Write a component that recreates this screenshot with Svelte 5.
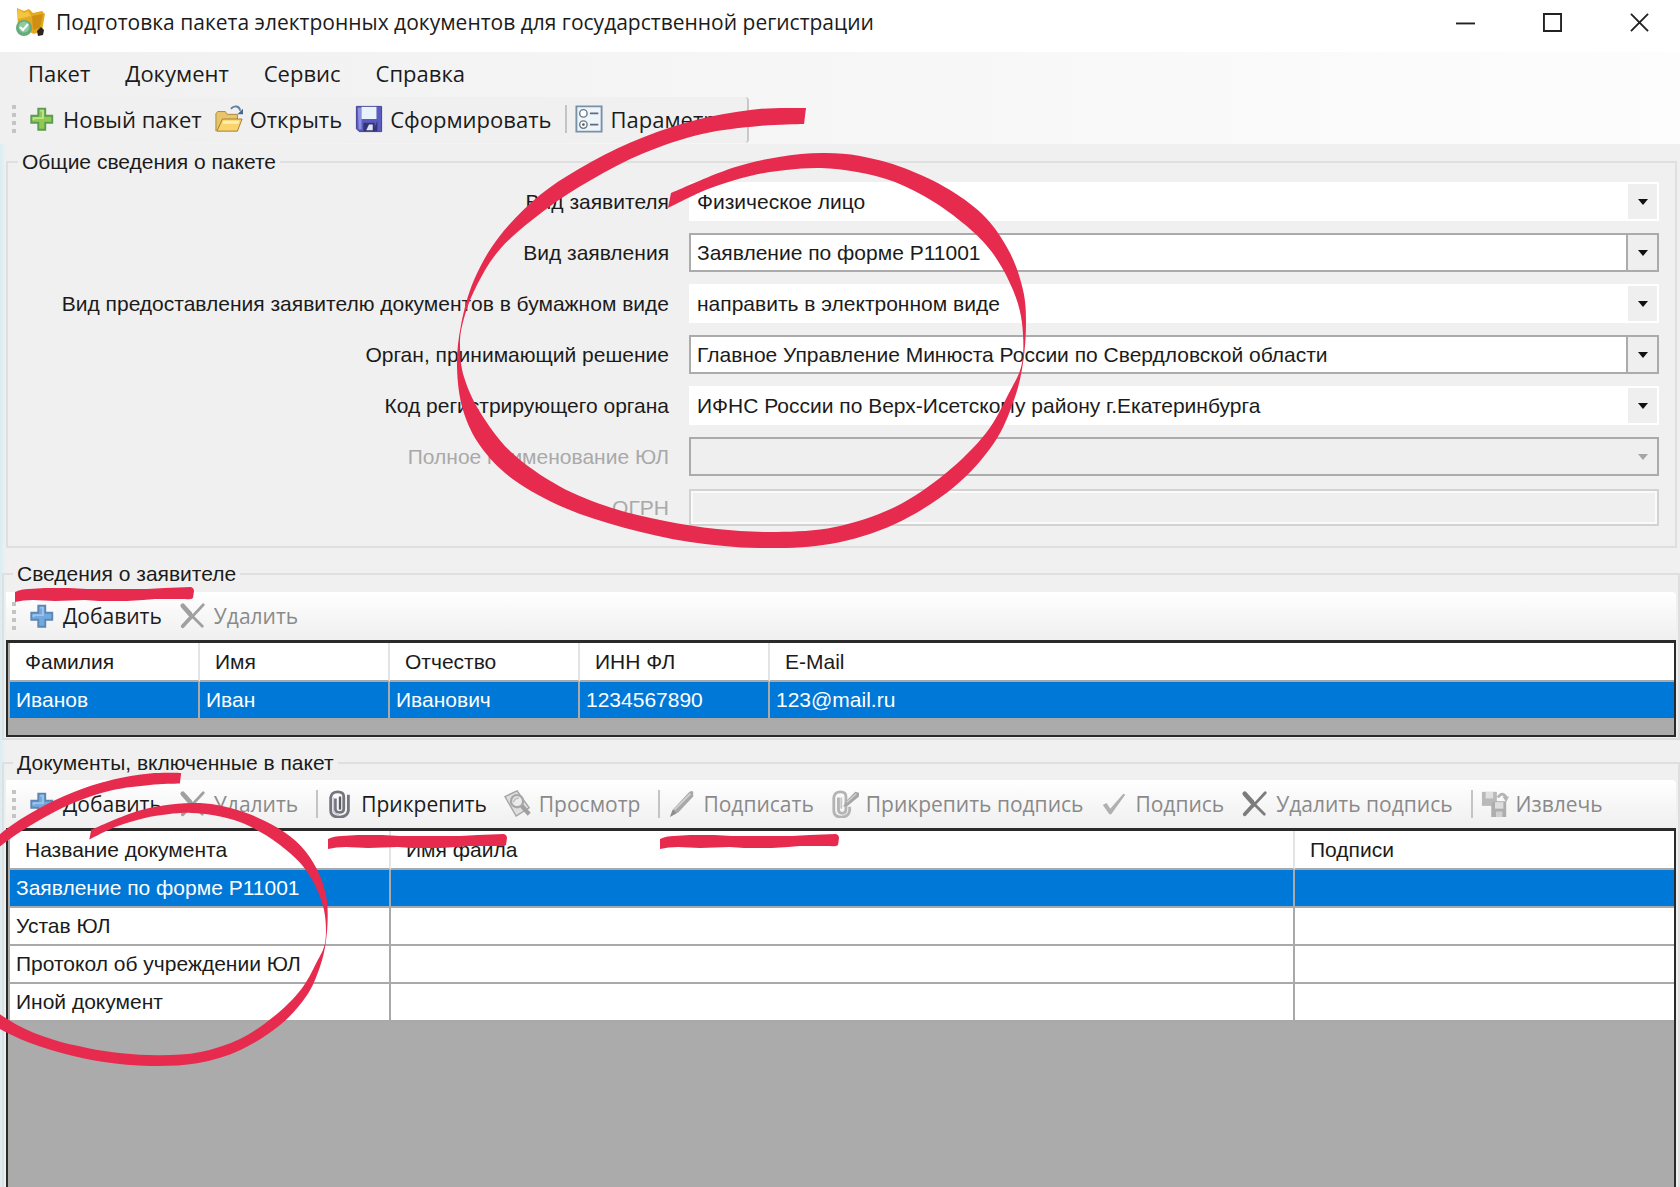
<script lang="ts">
	type Tool = { icon: string; label: string; disabled?: boolean; sep?: boolean };

	const menu = ['Пакет', 'Документ', 'Сервис', 'Справка'];

	const mainTools: Tool[] = [
		{ icon: 'plus-green', label: 'Новый пакет' },
		{ icon: 'folder', label: 'Открыть' },
		{ icon: 'save', label: 'Сформировать' },
		{ icon: 'params', label: 'Параметры', sep: true }
	];

	const personTools: Tool[] = [
		{ icon: 'plus-blue', label: 'Добавить' },
		{ icon: 'cross', label: 'Удалить', disabled: true }
	];

	const docTools: Tool[] = [
		{ icon: 'plus-blue', label: 'Добавить' },
		{ icon: 'cross', label: 'Удалить', disabled: true },
		{ icon: 'clip', label: 'Прикрепить', sep: true },
		{ icon: 'preview', label: 'Просмотр', disabled: true },
		{ icon: 'pen', label: 'Подписать', disabled: true, sep: true },
		{ icon: 'clip-pen', label: 'Прикрепить подпись', disabled: true },
		{ icon: 'check', label: 'Подпись', disabled: true },
		{ icon: 'cross-dark', label: 'Удалить подпись', disabled: true },
		{ icon: 'extract', label: 'Извлечь', disabled: true, sep: true }
	];

	const fields = [
		{ id: 'applicant', label: 'Вид заявителя', value: 'Физическое лицо', flat: true },
		{ id: 'statement', label: 'Вид заявления', value: 'Заявление по форме Р11001' },
		{
			id: 'delivery',
			label: 'Вид предоставления заявителю документов в бумажном виде',
			value: 'направить в электронном виде',
			flat: true
		},
		{
			id: 'authority',
			label: 'Орган, принимающий решение',
			value: 'Главное Управление Минюста России по Свердловской области'
		},
		{
			id: 'code',
			label: 'Код регистрирующего органа',
			value: 'ИФНС России по Верх-Исетскому району г.Екатеринбурга',
			flat: true
		},
		{ id: 'fullname', label: 'Полное наименование ЮЛ', value: '', disabled: true }
	];

	const personCols = ['Фамилия', 'Имя', 'Отчество', 'ИНН ФЛ', 'E-Mail'];
	const persons = [['Иванов', 'Иван', 'Иванович', '1234567890', '123@mail.ru']];

	const docCols = ['Название документа', 'Имя файла', 'Подписи'];
	const docs = [
		'Заявление по форме Р11001',
		'Устав ЮЛ',
		'Протокол об учреждении ЮЛ',
		'Иной документ'
	];

	let selectedPerson = $state(0);
	let selectedDoc = $state(0);

	// marker strokes: outer and inner edge of one hand-drawn loop
	type Point = [number, number];

	const outer: Point[] = [
		[806, 108], [759, 109], [700, 119], [644, 137], [591, 162], [540, 195], [499, 237], [474, 280],
		[461, 325], [457, 367], [463, 410], [481, 447], [514, 480], [565, 508], [625, 528], [690, 542],
		[759, 548], [830, 544], [895, 524], [954, 487], [994, 443], [1014, 400], [1023, 363],
		[1026, 323], [1023, 290], [1010, 253], [986, 218], [950, 190], [904, 168], [860, 156],
		[822, 153], [779, 157], [732, 168], [671, 193]
	];
	const inner: Point[] = [
		[668, 208], [708, 189], [750, 176], [786, 170], [821, 168], [857, 172], [895, 182], [934, 202],
		[970, 229], [994, 255], [1013, 290], [1022, 323], [1022, 363], [1009, 393], [986, 433],
		[946, 473], [895, 507], [835, 527], [776, 532], [717, 529], [665, 521], [612, 508], [559, 486],
		[511, 452], [480, 412], [464, 377], [460, 347], [463, 322], [476, 287], [501, 248], [545, 210],
		[591, 180], [644, 153], [702, 134], [759, 126], [804, 124]
	];

	function curve(pts: Point[]) {
		let d = '';
		for (let i = 0; i < pts.length - 1; i++) {
			const a = pts[Math.max(i - 1, 0)];
			const b = pts[i];
			const c = pts[i + 1];
			const e = pts[Math.min(i + 2, pts.length - 1)];
			d += `C${b[0] + (c[0] - a[0]) / 6} ${b[1] + (c[1] - a[1]) / 6} `;
			d += `${c[0] - (e[0] - b[0]) / 6} ${c[1] - (e[1] - b[1]) / 6} ${c[0]} ${c[1]}`;
		}
		return d;
	}

	const loop = `M${outer[0]}${curve(outer)}L${inner[0]}${curve(inner)}Z`;
	const dash =
		'M0 4Q6 1 14 1L30 0 54 0 72 1 98 1 132 1 150 0 176 -1Q179 0 179 3L178 10Q176 12 170 11L140 11 128 12 112 13 84 13 70 12 40 13 18 12Q8 12 0 14Z';
</script>

{#snippet icon(name: string)}
	<svg class="icon" viewBox="0 0 30 30" aria-hidden="true">
		{#if name === 'plus-green'}
			<path d="M11 4h7.500v7.500H26V19h-7.500v7.500H11V19H3.500v-7.500H11z" fill="#93c950" stroke="#5a9c52" stroke-width="2" />
			<path d="M13 6h3v8H6v2" fill="none" stroke="#bfe38c" stroke-width="2" />
		{:else if name === 'plus-blue'}
			<path d="M11 4h7.500v7.500H26V19h-7.500v7.500H11V19H3.500v-7.500H11z" fill="#74a9df" stroke="#5d87b3" stroke-width="2" />
			<path d="M13 6h3v8H6v2" fill="none" stroke="#9cc4ee" stroke-width="2" />
		{:else if name === 'folder'}
			<path d="M1 28V9l2-2h8l2 3h11v5" fill="#e8c46a" stroke="#a88639" />
			<path d="M2 28 8 15h21l-5 13z" fill="#fbd36b" stroke="#9d7a30" />
			<path d="M9 17h17l-1 3H8z" fill="#fff0b0" />
			<path d="M17 4c4-4 9-3 10 2" fill="none" stroke="#5f7f9f" stroke-width="2" />
			<path d="M30 4v6h-6z" fill="#47698d" />
		{:else if name === 'save'}
			<path d="M1.500 1.500h27v27h-24l-3-3z" fill="#5a5bc0" stroke="#3b3c8f" />
			<path d="M3 3h4v23H4z" fill="#8e90e2" />
			<path d="M7 2h16v13H7z" fill="#e9f2fb" />
			<path d="M24 17v11h-5z" fill="#34357f" />
			<path d="M9 19h12v9H9z" fill="#33356f" />
			<path d="M15 21h4v6h-7z" fill="#dfe3f3" />
		{:else if name === 'params'}
			<path d="M1.500 1.500h27v27h-27z" fill="#eef5fa" stroke="#7990a5" stroke-width="2" />
			<circle cx="9" cy="9" r="4" fill="#fff" stroke="#6a7885" stroke-width="1.500" />
			<circle cx="9" cy="21" r="4" fill="#fff" stroke="#6a7885" stroke-width="1.500" />
			<circle cx="9" cy="21" r="1.500" fill="#56636f" />
			<path d="M16 9h9M16 21h9" stroke="#5b6e80" stroke-width="2" />
		{:else if name === 'cross' || name === 'cross-dark'}
			<g stroke={name === 'cross' ? '#a0a0a0' : '#7c7c7c'} fill="none" stroke-linecap="round">
				<path d="M4 4 12 13" stroke-width="5" />
				<path d="M11 12 25 26" stroke-width="3" />
				<path d="M26 3 13 17" stroke-width="3" />
				<path d="M14 15 4 26" stroke-width="4" />
			</g>
		{:else if name === 'clip'}
			<path
				d="M10 9v11q0 4 4.500 4t4.500-4V7q0-5-6.500-5T5 8v14q0 7 9 7t10-7V5"
				fill="none"
				stroke="#75757f"
				stroke-width="3"
			/>
			<path d="M15 7v14" stroke="#5d5d68" stroke-width="2.500" />
			<path d="M8 8v14q1 4 6 4" fill="none" stroke="#c8c8d0" stroke-width="1.500" />
		{:else if name === 'preview'}
			<path d="M1 7 14 1l13 18-14 9z" fill="#dedede" stroke="#a4a4a4" stroke-width="1.500" />
			<circle cx="14" cy="12" r="6.500" fill="#ececec" stroke="#a8a8a8" stroke-width="2.500" />
			<path d="M19 17 27 26" stroke="#a0a0a0" stroke-width="4.500" />
			<path d="M10 13q2-5 6-4" fill="none" stroke="#bbb" stroke-width="1.500" />
		{:else if name === 'pen'}
			<path d="M3 28 6 20 22 3q3-3 5-1v5L11 24z" fill="#a8a8a8" />
			<path d="M7 21 24 4" stroke="#cfcfcf" stroke-width="2" />
			<path d="M2 29 5 21 9 25z" fill="#8d8d8d" />
		{:else if name === 'clip-pen'}
			<path
				d="M8 8v13q0 4 4 4t4-4V7q0-5-6-5T3 8v14q0 7 8 7t9-7v-4"
				fill="none"
				stroke="#b4b4b4"
				stroke-width="3"
			/>
			<path d="M11 8v12" stroke="#c6c6c6" stroke-width="2" />
			<path d="M13 18 16 12 26 2l4 1v4L18 17z" fill="#a6a6a6" />
			<path d="M17 13 27 4" stroke="#d0d0d0" stroke-width="1.500" />
		{:else if name === 'check'}
			<path d="M3 16 7 14l4 6L25 4l2 1L12 26h-2z" fill="#b0b0b0" />
		{:else if name === 'extract'}
			<path d="M1 2h16v15H1z" fill="#b9b9b9" />
			<path d="M5 2h8v7H5z" fill="#e0e0e0" />
			<path d="M14 12h13v17H11V15z" fill="#adadad" />
			<path d="M15 13h9v7h-9z" fill="#dedede" />
			<path d="M16 23h7v6h-7z" fill="#d0d0d0" />
			<path d="M18 8q5-7 9 0" fill="none" stroke="#b5b5b5" stroke-width="3" />
			<path d="M23 7h7l-3 6z" fill="#b5b5b5" />
		{/if}
	</svg>
{/snippet}

{#snippet toolbar(tools: Tool[])}
	<span class="grip" aria-hidden="true"><i></i><i></i><i></i><i></i></span>
	{#each tools as tool}
		{#if tool.sep}<span class="sep"></span>{/if}
		<button class="tool" disabled={tool.disabled}>
			{@render icon(tool.icon)}{tool.label}
		</button>
	{/each}
{/snippet}

<main>
	<header class="titlebar">
		<svg class="logo" viewBox="0 0 30 30" aria-hidden="true">
			<path d="M2 1 9 4 14 2l4 4 9-2 3 3-3 17-8 3L3 20z" fill="#e5a91f" />
			<path d="M3 2 9 6l4-2 3 5-13 3z" fill="#f3c63e" />
			<path d="M17 9 28 7l-3 14-7 2z" fill="#cf8f14" />
			<path d="M22 24l4-4 3 3-1 5-5 1z" fill="#2b2622" />
			<circle cx="9" cy="21" r="8" fill="#62ad7b" />
			<circle cx="9" cy="20" r="5.500" fill="#8fcaa0" />
			<path d="M5 20l3 3 5-6" fill="none" stroke="#fff" stroke-width="2" />
		</svg>
		<h1>Подготовка пакета электронных документов для государственной регистрации</h1>
		<div class="window-buttons">
			<button aria-label="Свернуть">
				<svg viewBox="0 0 20 20"><path d="M0 11h20" /></svg>
			</button>
			<button aria-label="Развернуть">
				<svg viewBox="0 0 20 20"><path d="M1 1h18v18H1z" /></svg>
			</button>
			<button aria-label="Закрыть">
				<svg viewBox="0 0 20 20"><path d="M1 1l18 18M19 1 1 19" /></svg>
			</button>
		</div>
	</header>

	<nav>
		{#each menu as item}
			<button>{item}</button>
		{/each}
	</nav>

	<div class="strip">
		<div class="bar main-bar">{@render toolbar(mainTools)}</div>
	</div>

	<fieldset class="general">
		<legend>Общие сведения о пакете</legend>
		<div class="form">
			{#each fields as field}
				<label for={field.id} class:off={field.disabled}>{field.label}</label>
				<div class="combo" class:flat={field.flat} class:off={field.disabled}>
					<select id={field.id} disabled={field.disabled}>
						<option>{field.value}</option>
					</select>
					<span class="arrow"></span>
				</div>
			{/each}
			<label for="ogrn" class="off">ОГРН</label>
			<input id="ogrn" type="text" disabled />
		</div>
	</fieldset>

	<fieldset class="person">
		<legend>Сведения о заявителе</legend>
		<div class="bar">{@render toolbar(personTools)}</div>
		<div class="grid">
			<table>
				<colgroup>
					<col class="c-name" /><col class="c-name" /><col class="c-name" /><col class="c-name" /><col />
				</colgroup>
				<thead>
					<tr>
						{#each personCols as col}<th>{col}</th>{/each}
					</tr>
				</thead>
				<tbody>
					{#each persons as row, i}
						<tr class:selected={i === selectedPerson} onclick={() => (selectedPerson = i)}>
							{#each row as cell}<td>{cell}</td>{/each}
						</tr>
					{/each}
				</tbody>
			</table>
		</div>
	</fieldset>

	<fieldset class="docs">
		<legend>Документы, включенные в пакет</legend>
		<div class="bar">{@render toolbar(docTools)}</div>
		<div class="grid">
			<table>
				<colgroup><col class="c-title" /><col class="c-file" /><col /></colgroup>
				<thead>
					<tr>
						{#each docCols as col}<th>{col}</th>{/each}
					</tr>
				</thead>
				<tbody>
					{#each docs as doc, i}
						<tr class:selected={i === selectedDoc} onclick={() => (selectedDoc = i)}>
							<td>{doc}</td>
							<td></td>
							<td></td>
						</tr>
					{/each}
				</tbody>
			</table>
		</div>
	</fieldset>

	<svg class="marker" viewBox="0 0 1680 1187" aria-hidden="true">
		<path d={loop} />
		<path d={loop} transform="translate(-355.600 701) scale(0.666)" />
		<path d={dash} transform="translate(15 588)" />
		<path d={dash} transform="translate(328 835)" />
		<path d={dash} transform="translate(660 835)" />
	</svg>
</main>

<style>
	:global(body) {
		margin: 0;
	}

	main {
		position: relative;
		box-sizing: border-box;
		display: flex;
		flex-direction: column;
		min-height: 100vh;
		overflow: hidden;
		background: linear-gradient(90deg, #d9edf3, #f0f0f0 6px);
		color: #1b1b1b;
		font: 21px/24px 'Liberation Sans', Arial, sans-serif;
	}

	button,
	select,
	input {
		margin: 0;
		padding: 0;
		border: 0;
		background: none;
		color: inherit;
		font: inherit;
	}

	.titlebar,
	nav,
	.bar {
		font-family: 'Open Sans', 'Noto Sans', sans-serif;
	}

	.titlebar {
		display: flex;
		align-items: center;
		height: 52px;
		padding: 0 31px 8px 14px;
		box-sizing: border-box;
		background: #fff;
	}

	.logo {
		width: 32px;
		height: 30px;
	}

	h1 {
		flex: 1;
		margin: 0 0 0 10px;
		font-size: 21px;
		font-weight: 400;
	}

	.window-buttons {
		display: flex;
		gap: 68px;
	}

	.window-buttons button {
		display: flex;
	}

	.window-buttons svg {
		width: 19px;
		height: 19px;
		fill: none;
		stroke: #222;
		stroke-width: 2;
	}

	nav,
	.main-bar {
		font-size: 22px;
	}

	nav {
		display: flex;
		align-items: center;
		gap: 35px;
		height: 45px;
		padding: 0 28px 4px;
		box-sizing: border-box;
		background: linear-gradient(90deg, #f0f0f0, #fdfdfd);
	}

	.strip {
		display: flex;
		height: 47px;
		background: linear-gradient(90deg, #f0f0f0, #fdfdfd);
	}

	.bar {
		display: flex;
		align-items: center;
		height: 48px;
		padding-left: 6px;
		box-sizing: border-box;
		background: linear-gradient(#fff, #efefef);
		border-radius: 0 4px 4px 0;
	}

	.main-bar {
		height: 46px;
		padding: 0 4px 2px 12px;
		background: #f0f0f0;
		border-right: 2px solid #c8c8c8;
	}

	.grip {
		display: grid;
		gap: 4px;
		width: 4px;
		margin-right: 8px;
	}

	.grip i {
		width: 4px;
		height: 4px;
		background: #c4c4c4;
	}

	.sep {
		width: 2px;
		height: 28px;
		margin: 0 4px 0 5px;
		background: #c4c4c4;
	}

	.tool {
		display: flex;
		align-items: center;
		gap: 7px;
		padding: 0 13px 0 4px;
		white-space: nowrap;
	}

	.main-bar .tool {
		padding-right: 9px;
	}

	.tool:disabled {
		color: #8a8a8a;
	}

	.icon {
		width: 28px;
		height: 28px;
	}

	fieldset {
		min-width: 0;
		margin: 0;
		padding: 0;
		border: 2px solid #dfdfdf;
	}

	legend {
		padding: 0 4px;
		margin-left: 7px;
	}

	.general {
		margin: 6px 3px 0 6px;
		padding: 8px 16px 19px 12px;
	}

	.general legend {
		margin-left: -2px;
	}

	.form {
		display: grid;
		grid-template-columns: 649px 1fr;
		grid-auto-rows: 39px;
		gap: 12px 20px;
		align-items: center;
	}

	label {
		text-align: right;
	}

	label.off {
		color: #a9a9a9;
	}

	.combo {
		display: grid;
		grid-template-columns: 1fr 31px;
		height: 39px;
		box-sizing: border-box;
		border: 2px solid #ababab;
		background: #fff;
	}

	.combo select {
		grid-area: 1 / 1 / 2 / 3;
		appearance: none;
		padding: 0 40px 0 6px;
		outline: none;
		opacity: 1;
	}

	.arrow {
		grid-area: 1 / 2 / 2 / 3;
		display: grid;
		place-items: center;
		border-left: 2px solid #ababab;
		background: #efefef;
		pointer-events: none;
	}

	.arrow::before {
		content: '';
		border: 5px solid transparent;
		border-top: 6px solid #111;
		border-bottom: 0;
	}

	.combo.flat,
	.combo.flat .arrow {
		border-color: #fff;
	}

	.combo.off {
		background: #efefef;
	}

	.combo.off .arrow {
		border-color: transparent;
	}

	.combo.off .arrow::before {
		border-top-color: #a5a5a5;
	}

	input {
		height: 37px;
		box-sizing: border-box;
		border: 2px solid #d2d2d2;
		background: #efefef;
		box-shadow: inset 0 0 0 2px #fafafa;
	}

	.person,
	.docs {
		margin: 14px 0 0 2px;
		padding: 6px 2px 1px;
	}

	.docs {
		flex: 1;
		margin-top: 11px;
		padding: 5px 2px 0;
		border-bottom: 0;
	}

	.grid {
		min-height: 92px;
		padding-left: 2px;
		border: 2px solid #2a2a2a;
		border-top-width: 3px;
		background: #ababab;
	}

	.docs .grid {
		min-height: calc(100vh - 831px);
		border-bottom: 0;
	}

	table {
		width: 100%;
		border-collapse: separate;
		border-spacing: 0;
		table-layout: fixed;
	}

	.c-name {
		width: 190px;
	}

	.c-title {
		width: 381px;
	}

	.c-file {
		width: 904px;
	}

	th,
	td {
		height: 36px;
		padding: 0 6px;
		border-right: 2px solid #a9a9a9;
		border-bottom: 2px solid #a9a9a9;
		background: #fff;
		text-align: left;
		white-space: nowrap;
	}

	th {
		height: 37px;
		padding-left: 15px;
		border-right-color: #e4e4e4;
		font-weight: 400;
	}

	th:last-child,
	td:last-child {
		border-right: 0;
	}

	.selected td {
		background: #0078d7;
		color: #fff;
	}

	.marker {
		position: absolute;
		top: 0;
		left: 0;
		width: 100%;
		fill: #e62b4e;
		pointer-events: none;
	}
</style>
